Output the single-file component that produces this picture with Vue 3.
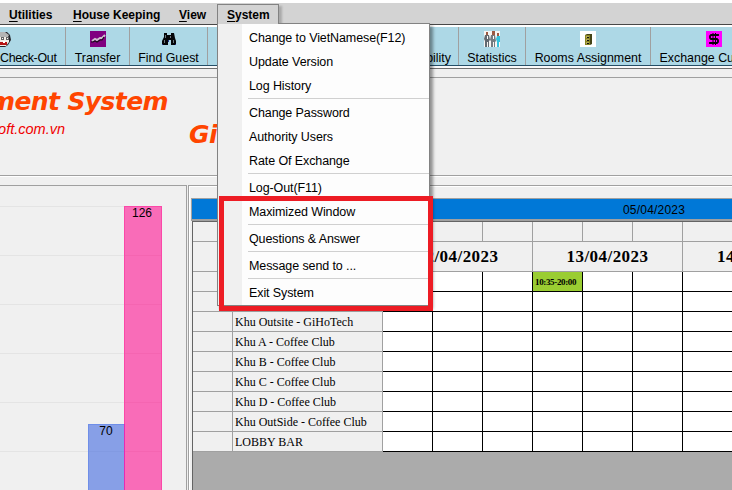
<script setup>
const tools = [
  { label: 'Check-Out', icon: 'guest', w: 66 },
  { label: 'Transfer', icon: 'transfer', w: 64 },
  { label: 'Find Guest', icon: 'find', w: 78 },
  { label: 'Rooms Availability', icon: '', w: 251, end: true },
  { label: 'Statistics', icon: 'people', w: 67 },
  { label: 'Rooms Assignment', icon: 'cabinet', w: 125 },
  { label: 'Exchange Currency', icon: 'dollar', w: 127 },
]
const groups = [
  ['Change to VietNamese(F12)', 'Update Version', 'Log History'],
  ['Change Password', 'Authority Users', 'Rate Of Exchange'],
  ['Log-Out(F11)', 'Maximized Window'],
  ['Questions & Answer'],
  ['Message send to ...'],
  ['Exit System'],
]
const areas = ['', '', 'Khu Outsite - GiHoTech', 'Khu A - Coffee Club', 'Khu B - Coffee Club', 'Khu C - Coffee Club', 'Khu D - Coffee Club', 'Khu OutSide - Coffee Club', 'LOBBY BAR']
const dates = ['12/04/2023', '13/04/2023', '14/04/2023']
const gridLines = [206, 255, 304, 353, 402, 451]
</script>

<template>
  <div class="window">
    <nav class="menubar">
      <span class="m utilities"><u>U</u>tilities</span>
      <span class="m house"><u>H</u>ouse Keeping</span>
      <span class="m view"><u>V</u>iew</span>
      <span class="m system"><u>S</u>ystem</span>
    </nav>
    <div class="toolbar">
      <div v-for="t in tools" :key="t.label" class="tool" :class="{ end: t.end, first: t.icon === 'guest' }" :style="{ width: t.w + 'px' }">
        <svg class="icon" width="16" height="16" viewBox="0 0 16 16">
          <g v-if="t.icon === 'guest'">
            <path d="M4 1h8l3 3 1 5-3 5-3 2H4L1 12V5z" fill="#26262c" />
            <path d="M5 1h5l4 3-1 2H5z" fill="#b5b5b5" />
            <path d="M5 6h9v5l-3 4H5z" fill="#f3ece6" />
            <path d="M6 6h3v3H6zM11 6h3v3h-3z" fill="#666" />
            <path d="M7 7h1v1H7zM12 7h1v1h-1z" fill="#fff" />
            <path d="M5 11h7v3H5z" fill="#b51515" />
            <path d="M8 10h2v2H8z" fill="#fff" />
          </g>
          <g v-else-if="t.icon === 'transfer'">
            <path d="M0 0h16v16H0z" fill="#800080" />
            <path d="M2 10l3-2 2 1 3-2 2 0 3-3" fill="none" stroke="#cdbfcd" stroke-width="2" />
            <path d="M1 11h2l2-1 2 1 3-2 2 0 2-3" fill="none" stroke="#1a0a1a" stroke-width="1.2" />
          </g>
          <g v-else-if="t.icon === 'find'">
            <path d="M3 2h3v2h4V2h3l1 5 1 3v4h-5V9H7v5H1v-4l2-4z" fill="#050508" />
            <path d="M4 4h1v3H4zM9 5h1v2H9zM3 9h1v3H3zM12 9h1v3h-1z" fill="#6d7680" />
            <path d="M1 13h1v1H1zM14 13h1v1h-1zM7 9h1v2H7z" fill="#25308c" />
          </g>
          <g v-else-if="t.icon === 'people'">
            <path d="M0 0h16v16H0z" fill="#f6f5f3" />
            <path d="M2 1h2v3H2zM8 0h3v4H8zM13 2h2v3h-2z" fill="#9a5942" />
            <path d="M1 4h4l1 5-1 1v6H4v-5H3v5H1v-6L0 8z" fill="#626970" />
            <path d="M7 4h4l1 6-1 1v5h-1v-5H9v5H7v-6L6 9z" fill="#747b80" />
            <path d="M13 5h3v6h-1v5h-2v-5l-1-3z" fill="#33c1dc" />
            <path d="M3 5h1v3H3zM9 5h1v3H9z" fill="#fff" />
          </g>
          <g v-else-if="t.icon === 'cabinet'">
            <path d="M0 0h16v16H0z" fill="#fff" />
            <path d="M5 4l2-1h5v10l-2 1H5z" fill="#444417" />
            <path d="M5 4h5v10H5z" fill="#888421" />
            <path d="M6 5h3v2H6zM6 8h3v2H6zM6 11h3v2H6z" fill="#b3a957" />
            <path d="M7 6h2v1H7zM7 9h2v1H7zM7 12h2v1H7z" fill="#111" />
          </g>
          <g v-else-if="t.icon === 'dollar'">
            <path d="M0 0h16v16H0z" fill="#f0f" />
            <path d="M12 5V4H5L4 5v2l1 1h6l1 1v2l-1 1H4v-1" fill="none" stroke="#080008" stroke-width="1.8" />
            <path d="M7 2v12M9.5 2v12" stroke="#080008" stroke-width="1" />
          </g>
        </svg>
        <span>{{ t.label }}</span>
      </div>
    </div>
    <header class="banner">
      <div class="product">
        <h1>ment System</h1>
        <p>oft.com.vn</p>
      </div>
      <h1 class="brand">Gi</h1>
    </header>
    <main class="body">
      <section class="chart">
        <svg width="186" height="304" viewBox="0 186 186 304">
          <path v-for="y in gridLines" :key="y" :d="`M0 ${y + 0.5}H162`" stroke="#e4e4e4" />
          <rect x="88.5" y="424.5" width="36" height="70" fill="#4169e1" fill-opacity=".6" stroke="#6f8ee8" />
          <rect x="124.5" y="206.5" width="37" height="290" fill="#ff1493" fill-opacity=".6" stroke="#fb48a8" />
          <path d="M124.5 424V490" stroke="#e82ab4" />
          <path d="M125 255.5H161M125 304.5H161M125 353.5H161M125 402.5H161M125 451.5H161" stroke="#f565b1" />
          <text x="142" y="217" text-anchor="middle">126</text>
          <text x="106" y="435" text-anchor="middle">70</text>
        </svg>
      </section>
      <section class="schedule">
        <div class="today">05/04/2023</div>
        <div class="grid">
          <i class="cell head"></i><i class="cell head"></i>
          <i v-for="n in 7" :key="'h' + n" class="cell head"></i>
          <i class="cell head"></i><i class="cell head"></i>
          <b v-for="d in dates" :key="d" class="cell head date">{{ d }}</b>
          <template v-for="(a, r) in areas" :key="r">
            <i class="cell head"></i>
            <span class="cell head area">{{ a }}</span>
            <span v-for="c in 7" :key="c" class="cell slot" :class="{ booked: r === 0 && c === 4 }">{{ r === 0 && c === 4 ? '10:35-20:00' : '' }}</span>
          </template>
        </div>
      </section>
    </main>
    <div class="dropdown">
      <ul v-for="(g, i) in groups" :key="i">
        <li v-for="item in g" :key="item">{{ item }}</li>
      </ul>
    </div>
    <div class="highlight"></div>
  </div>
</template>

<style>
body { margin: 0; overflow: hidden; }
</style>
<style scoped>
* { box-sizing: border-box; }
.window { position: relative; width: 732px; height: 490px; overflow: hidden; display: flex; flex-direction: column; background: #f0f0f0; font-family: "Liberation Sans", Arial, sans-serif; color: #000; }
.menubar { height: 25px; flex: none; display: flex; background: #d3d3d3; border-top: 3px solid #fff; border-bottom: 1px solid #484848; font-size: 12px; font-weight: bold; line-height: 24px; white-space: nowrap; }
.utilities { margin-left: 9px; width: 64px; }
.house { width: 106px; }
.view { width: 38px; }
.system { width: 62px; height: 21px; margin-top: 1px; padding-left: 9px; line-height: 20px; border: 1px solid #828282; border-bottom: 0; box-shadow: 3px 2px 2px #aaa; }
u { text-decoration-thickness: 1px; text-underline-offset: 2px; }
.toolbar { height: 44px; flex: none; display: flex; background: #add8e6; border-top: 2px solid #fff; border-bottom: 1px solid #6e6e6e; box-shadow: inset 0 -2px #fafafa, inset 0 -3px #254e66; }
.tool { flex: none; height: 38px; display: flex; flex-direction: column; align-items: center; border-right: 1px solid #a0a0a0; padding-top: 4px; font-size: 12.4px; line-height: 14px; white-space: nowrap; overflow: hidden; gap: 4px; }
.tool.end { align-items: flex-end; padding-right: 7px; }
.tool.first { align-items: flex-start; }
.first span { letter-spacing: -.3px; }
.first .icon { margin-left: -5px; }
.banner { height: 100px; flex: none; display: flex; border-top: 1px solid #a0a0a0; border-bottom: 1px solid #fff; box-shadow: inset 0 -1px #a0a0a0; margin: 8px 0; padding-top: 9px; }
.product { width: 189px; }
h1 { margin: 0; font: italic bold 25px/30px "DejaVu Sans", Verdana, sans-serif; letter-spacing: -.6px; color: #ff4500; white-space: nowrap; }
.product h1 { width: 168px; display: flex; justify-content: flex-end; }
.product p { margin: 3px 0 0; width: 65px; display: flex; justify-content: flex-end; font-style: italic; font-size: 14.5px; line-height: 18px; color: #f00000; }
.brand { margin-top: 33px; }
.body { flex: 1; display: flex; gap: 1px; min-height: 0; }
.chart { width: 187px; border-top: 1px solid #a0a0a0; border-right: 1px solid #a0a0a0; }
.chart svg { display: block; }
.chart text { font-size: 12px; }
.schedule { flex: 1; min-width: 0; border-top: 1px solid #a0a0a0; border-left: 1px solid #a0a0a0; box-shadow: inset 1px 1px #fff; padding: 12px 0 0 2px; display: flex; flex-direction: column; }
.today { height: 23px; flex: none; background: #0078d7; border: 1px solid #a0a0a0; border-width: 1px 0 2px 1px; font-size: 12px; line-height: 22px; padding-left: 431px; letter-spacing: .2px; }
.grid { flex: 1; min-height: 0; border-top: 1px solid #646464; border-left: 1px solid #646464; margin-left: 1px; background: #ababab; display: grid; grid-template-columns: 40px 150px repeat(7, 50px); grid-template-rows: 20px 30px repeat(9, 20px); align-content: start; }
.cell { border-right: 1px solid #a0a0a0; border-bottom: 1px solid #a0a0a0; white-space: nowrap; overflow: hidden; }
.head { background: #f0f0f0; }
.date { grid-column: span 3; font: bold 17px/29px "Liberation Serif", serif; letter-spacing: .45px; text-align: center; }
.date:nth-of-type(3) { grid-column: span 1; padding-left: 34px; text-align: left; }
.area { font: 12px/21px "Liberation Serif", serif; padding-left: 2px; }
.slot { background: #fff; border-color: #000; }
.booked { background: #9acd32; font: bold 9px/20px "Liberation Serif", serif; letter-spacing: -.35px; padding-left: 2px; }
.dropdown { position: absolute; left: 217px; top: 23px; width: 213px; height: 283px; padding: 1px 0 0 25px; border: 1px solid #828282; background: linear-gradient(90deg, #f0f0f0 24px, #fdfdfd 24px); box-shadow: 3px 3px 3px rgba(0,0,0,.4); }
.dropdown::before { content: ""; position: absolute; left: 0; top: -1px; width: 60px; height: 1px; background: #d3d3d3; }
ul { list-style: none; margin: 0 0 0 5px; padding: 0; }
ul + ul { border-top: 1px solid #d0d0d0; margin-top: 1px; padding-top: 1px; }
li { height: 24px; padding: 2px 0 0 1px; font-size: 12.5px; line-height: 22px; letter-spacing: -.1px; white-space: nowrap; }
.highlight { position: absolute; left: 219px; top: 196px; width: 214px; height: 115px; border: 5px solid #ed1c24; }
</style>
